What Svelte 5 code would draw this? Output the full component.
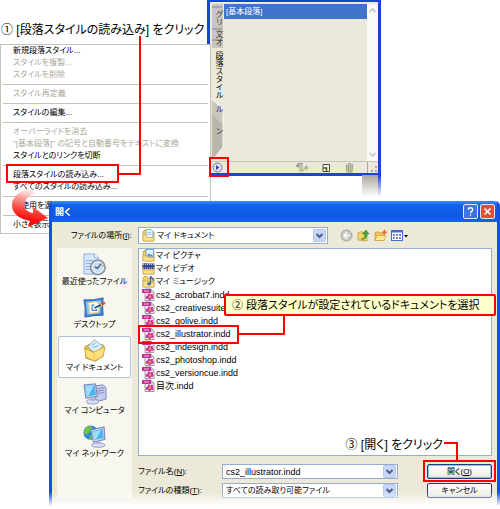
<script lang="ts">
	interface MenuItem {
		label: string;
		disabled?: boolean;
	}

	const menuGroups: MenuItem[][] = [
		[
			{ label: '新規段落スタイル...' },
			{ label: 'スタイルを複製...', disabled: true },
			{ label: 'スタイルを削除', disabled: true }
		],
		[{ label: 'スタイル再定義', disabled: true }],
		[{ label: 'スタイルの編集...' }],
		[
			{ label: 'オーバーライドを消去', disabled: true },
			{ label: '"[基本段落]" の記号と自動番号をテキストに変換', disabled: true },
			{ label: 'スタイルとのリンクを切断' }
		],
		[{ label: '段落スタイルの読み込み...' }, { label: 'すべてのスタイルの読み込み...' }],
		[{ label: '未使用を選択' }],
		[{ label: '小さく表示' }]
	];

	const places = [
		{ icon: 'recent', label: '最近使ったファイル' },
		{ icon: 'desktop', label: 'デスクトップ' },
		{ icon: 'documents', label: 'マイ ドキュメント' },
		{ icon: 'computer', label: 'マイ コンピュータ' },
		{ icon: 'network', label: 'マイ ネットワーク' }
	];

	const files = [
		{ icon: 'pictures', name: 'マイ ピクチャ' },
		{ icon: 'video', name: 'マイ ビデオ' },
		{ icon: 'music', name: 'マイ ミュージック' },
		{ icon: 'indd', name: 'cs2_acrobat7.indd' },
		{ icon: 'indd', name: 'cs2_creativesuite.indd' },
		{ icon: 'indd', name: 'cs2_golive.indd' },
		{ icon: 'indd', name: 'cs2_illustrator.indd' },
		{ icon: 'indd', name: 'cs2_indesign.indd' },
		{ icon: 'indd', name: 'cs2_photoshop.indd' },
		{ icon: 'indd', name: 'cs2_versioncue.indd' },
		{ icon: 'indd', name: '目次.indd' }
	];

	let place = $state('documents');
	let fileName = $state('cs2_illustrator.indd');
</script>

{#snippet chevron()}
	<svg class="chevron" viewBox="0 0 13 13" aria-hidden="true">
		<rect x="0.5" y="0.5" width="12" height="12" rx="1" fill="#c8d6f8" stroke="#b4c6f0" />
		<path d="M3.5 5 L6.5 8 L9.5 5" fill="none" stroke="#4d6185" stroke-width="2" />
	</svg>
{/snippet}

{#snippet smallIcon(name)}
	<svg class="small-icon" viewBox="0 0 13 13" aria-hidden="true">
		{#if name === 'indd'}
			<path d="M3 1 H9 L12 4 V12.5 H3 Z" fill="#fbeef6" stroke="#8d8492" stroke-width="0.8" />
			<path d="M9 1 V4 H12" fill="#ddd" stroke="#8d8492" stroke-width="0.6" />
			<rect x="0" y="1" width="9" height="4" fill="#c42f96" />
			<path d="M2 3 H7" stroke="#f5b9e2" />
			<path d="M4 11 C3 8 5 7.5 6 7.5 C5 5 8 5 8.5 7 C10 4.5 12 6 10.5 8 C13 9 11 12 9 10.5 C9 13 6 12.5 6.5 10.5 Z" fill="#c9309a" />
			<circle cx="8" cy="8.7" r="1.3" fill="#f6a04c" />
		{:else}
			<path d="M1 3 L2 1.5 H5 L6 3 H12 V12 H1 Z" fill="#f2cf63" stroke="#b8923a" stroke-width="0.7" />
			{#if name === 'pictures'}
				<rect x="4" y="0.5" width="7.5" height="7.5" fill="#e8f4ff" stroke="#5c8fc4" stroke-width="0.8" />
				<path d="M4.5 7.5 L7 4 L9 6 L10 5 L11 7.5 Z" fill="#4f9bd3" />
				<path d="M1 7 H5 L6 8.5 H12 V12 H1 Z" fill="#fbe28a" stroke="#c39b3d" stroke-width="0.6" />
			{:else if name === 'video'}
				<rect x="0.5" y="1.5" width="12" height="5.5" fill="#334b7b" />
				<path d="M1 2.5 H12.5 M1 6 H12.5" stroke="#c8d8ef" stroke-dasharray="1 1" />
				<path d="M1 8 H12 V12 H1 Z" fill="#fbe28a" stroke="#c39b3d" stroke-width="0.6" />
			{:else if name === 'music'}
				<path d="M1 6 H6 L7 7.5 H12 V12 H1 Z" fill="#fbe28a" stroke="#c39b3d" stroke-width="0.6" />
				<path d="M8.5 8.5 V1 C9 3 12 3 11 6" fill="none" stroke="#3f67b5" stroke-width="1.3" />
				<ellipse cx="7" cy="8.7" rx="2" ry="1.5" fill="#3f67b5" />
			{:else}
				<path d="M4 0.5 H9 L11 2.5 V9 H4 Z" fill="#e9f5ff" stroke="#6b9ccc" stroke-width="0.8" />
				<path d="M5.5 3.5 H9 M5.5 5.5 H9" stroke="#8ab8df" stroke-width="0.8" />
				<path d="M1 6 H4 L5 8.5 H12 V12 H1 Z" fill="#fbe28a" stroke="#c39b3d" stroke-width="0.6" />
			{/if}
		{/if}
	</svg>
{/snippet}

{#snippet placeIcon(name)}
	<svg class="place-icon" viewBox="0 0 26 24" aria-hidden="true">
		{#if name === 'recent'}
			<path d="M2 1 H13 L17 5 V22 H2 Z" fill="#d6e7fb" stroke="#8badda" />
			<path d="M13 1 V5 H17" fill="#fff" stroke="#8badda" />
			<path d="M4 8 H12 M4 11 H10 M4 14 H9 M4 17 H10" stroke="#83a9dd" />
			<circle cx="16.5" cy="15" r="7.5" fill="#e8eef5" stroke="#8796a8" stroke-width="1.8" />
			<circle cx="16.5" cy="15" r="5" fill="#c5dcf1" />
			<path d="M20 11 L16 16 L13.5 14.5" fill="none" stroke="#40566f" stroke-width="1.3" />
			<path d="M21 14 L23 13" stroke="#e19a3e" stroke-width="1.5" />
		{:else if name === 'desktop'}
			<path d="M2 4 Q12 5 22 2 Q21 11 22 20 Q12 20 3 22 Q4 12 2 4 Z" fill="#3d83d4" stroke="#2863b0" />
			<path d="M4 6 L20 4.5 L19 18 L5.5 19.5 Z" fill="#8cc4f2" />
			<path d="M7 7 L15 6 L18 9 L17 17 L8 18 Z" fill="#fff" stroke="#f4d276" />
			<path d="M13 9.5 H10.5 V15 H15 V13.5" fill="none" stroke="#3d83d4" stroke-width="1.2" />
			<path d="M13 12.5 L20 9" stroke="#26517f" stroke-width="1.8" />
			<path d="M20 9 L24 7" stroke="#dd4b35" stroke-width="2.5" />
			<path d="M19 7 L21 11" stroke="#f2b43a" stroke-width="1.5" />
		{:else if name === 'documents'}
			<path d="M3 8 L9 5 L12 8 L22 6 V18 L14 23 L4 20 Z" fill="#eebb45" stroke="#c6902a" />
			<path d="M6 8 L13 1 L22 8 L14 15 Z" fill="#dff1fd" stroke="#78add8" />
			<path d="M10 7 L14 4 M11 9 L17 7" stroke="#75acd9" />
			<path d="M3 10 L12 14 L24 8 L22 18 L13 23 L4 19 Z" fill="#ffe27c" stroke="#d3a43a" />
			<path d="M12 14 L13 22" stroke="#e7bd50" />
		{:else if name === 'computer'}
			<path d="M14 4 L22 3 L25 6 V18 L17 20 L14 17 Z" fill="#c5ccec" stroke="#7c86ba" />
			<path d="M16 7 L23 6 M16 9.5 L23 8.5 M16 12 L23 11" stroke="#7c86ba" />
			<path d="M2 3 L14 2 L16 15 L4 17 Z" fill="#c7d0ef" stroke="#707db7" />
			<path d="M3.5 4.5 L13 3.5 L14.5 13.5 L5 15 Z" fill="#4eb6ee" />
			<path d="M4 5 L12 4 L7 14 L5 14 Z" fill="#9be0fb" />
			<ellipse cx="11" cy="20.5" rx="6.5" ry="2.5" fill="#dce0f3" stroke="#8f98c4" />
			<path d="M9 16 H13 V20 H9 Z" fill="#abb4da" />
		{:else}
			<circle cx="9" cy="8" r="7.5" fill="#2e86d9" />
			<path d="M3 4 C6 0 11 1 11 3 C8 4 11 7 7 8 C6 11 3 10 2 8 Z M8 11 L13 9 L12 14 L8 15 Z" fill="#6dc542" />
			<path d="M9 5 L23 2 L24 15 L12 18 Z" fill="#c7d0ef" stroke="#707db7" />
			<path d="M10.5 6.5 L21.5 4 L22.5 13.5 L13 15.5 Z" fill="#4eb6ee" />
			<path d="M11 7 L20 5 L15 14 L13 15 Z" fill="#9be0fb" />
			<path d="M15 17 H19 V20 H15 Z" fill="#abb4da" />
			<ellipse cx="17" cy="21" rx="7" ry="2.3" fill="#dce0f3" stroke="#8f98c4" />
		{/if}
	</svg>
{/snippet}

<main class="figure">
	<p class="caption step-one">① [段落スタイルの読み込み] をクリック</p>

	<section class="palette" aria-label="段落スタイル">
		<div class="palette-main">
			<div class="tabs">
				<svg class="tab-shape" viewBox="0 0 12 157" aria-hidden="true">
					<path d="M0 0 H11 V44 H0 Z" fill="#c9c7bd" />
					<path d="M0 3 H10 M0 25 H10 M0 36 H10" stroke="#89877d" />
					<path d="M0 95 L11 106 V129 L0 133 Z" fill="#c9c7bd" />
					<path d="M0 110 L11 121 V143 L0 157 Z" fill="#b9b7ac" />
					<path d="M0 95 L11 106 V143 L0 157" fill="none" stroke="#f8f7f0" />
				</svg>
				<button class="tab">グリ</button>
				<button class="tab tab-text">文</button>
				<button class="tab">オ</button>
				<button class="tab active">段落スタイル</button>
				<button class="tab">ル</button>
				<button class="tab tab-line">ン</button>
			</div>
			<div class="styles">
				<button class="style-row">[基本段落]</button>
			</div>
			<div class="scrollbar">
				<button aria-label="上へ">
					<svg viewBox="0 0 9 9"><path d="M1.5 6 L4.5 3 L7.5 6" fill="none" stroke="#c4c3bb" stroke-width="1.5" /></svg>
				</button>
				<button aria-label="下へ">
					<svg viewBox="0 0 9 9"><path d="M1.5 3 L4.5 6 L7.5 3" fill="none" stroke="#c4c3bb" stroke-width="1.5" /></svg>
				</button>
			</div>
		</div>
		<div class="palette-tools">
			<button class="flyout" aria-label="メニュー">
				<svg viewBox="0 0 11 11">
					<circle cx="5.5" cy="5.5" r="4.5" fill="#dfe3f3" stroke="#7179ac" />
					<path d="M4 3 L7.5 5.5 L4 8 Z" fill="#3c4a9a" />
				</svg>
			</button>
			<button aria-label="オーバーライドを消去">
				<svg class="wide" viewBox="0 0 14 11">
					<path d="M5 1.5 V10 M7 1.5 V10 M8 1.5 H3" stroke="#9a988e" fill="none" />
					<path d="M1 3 A2 2 0 0 0 4 5 V1.5 Z" fill="#9a988e" />
					<path d="M8 9 L12 3 M9 6 H14 M11.5 4 V8.5" stroke="#aaa89e" fill="none" />
				</svg>
			</button>
			<button aria-label="新規スタイル">
				<svg viewBox="0 0 11 11">
					<path d="M2 2.5 H8.5 V9.5 H2 Z" fill="#f6f5ee" stroke="#4a4a46" />
					<path d="M2.5 6 H5.5 V9" fill="none" stroke="#4a4a46" stroke-width="1.5" />
				</svg>
			</button>
			<button aria-label="削除">
				<svg viewBox="0 0 11 11">
					<path d="M2.5 4 H8.5 L8 10 H3 Z" fill="#cfcdc2" stroke="#9d9b91" />
					<path d="M1.5 3 H9.5 M4 1.5 H7 M4.5 5 V9 M6.5 5 V9" stroke="#9d9b91" />
				</svg>
			</button>
			<svg class="grip" viewBox="0 0 11 11" aria-hidden="true">
				<path d="M0.5 0 V11" stroke="#aca899" />
				<path d="M8 5 h2 M4 9 h2 M8 9 h2" stroke="#aca899" stroke-width="2" />
			</svg>
		</div>
	</section>
	<div class="palette-tail"></div>

	<nav class="menu" aria-label="段落スタイルメニュー">
		{#each menuGroups as group, i}
			{#if i > 0}
				<hr />
			{/if}
			{#each group as item}
				<button class="menu-item" disabled={item.disabled}>{item.label}</button>
			{/each}
		{/each}
	</nav>

	<div class="mark mark-flyout"></div>
	<div class="mark mark-menu"></div>
	<svg class="leader leader-one" viewBox="0 0 23 139" aria-hidden="true">
		<path d="M22 0 V138 H0" fill="none" stroke="#f00" stroke-width="2" />
	</svg>

	<section class="dialog" aria-label="開く">
		<header class="title-bar">
			<h1>開く</h1>
			<button class="title-button" aria-label="ヘルプ">
				<svg viewBox="0 0 15 15">
					<path d="M5 5.5 C5 2.5 10 2.5 10 5.5 C10 7.5 7.5 7.3 7.5 9.5 M7.5 11 V12.5" fill="none" stroke="#fff" stroke-width="1.6" />
				</svg>
			</button>
			<button class="title-button close" aria-label="閉じる">
				<svg viewBox="0 0 15 15"><path d="M4 4 L11 11 M11 4 L4 11" stroke="#fff" stroke-width="1.8" /></svg>
			</button>
		</header>

		<div class="dialog-body">
			<div class="look-in">
				<label for="look-in">ファイルの場所(<u>I</u>):</label>
				<div class="combo folder-combo">
					{@render smallIcon('folder')}
					<select id="look-in">
						<option>マイ ドキュメント</option>
					</select>
					{@render chevron()}
				</div>
				<div class="nav-tools">
					<button aria-label="戻る">
						<svg viewBox="0 0 13 13">
							<circle cx="6.5" cy="6.5" r="5.5" fill="#c9c8c1" stroke="#a5a49d" />
							<path d="M7 3.5 L4 6.5 L7 9.5 M4 6.5 H9.5" fill="none" stroke="#fff" stroke-width="1.5" />
						</svg>
					</button>
					<button aria-label="1 つ上のフォルダへ">
						<svg viewBox="0 0 13 13">
							<path d="M1 4 L5 2.5 L6 4 H10 V12 L1 11 Z" fill="#f6d667" stroke="#c39b3d" stroke-width="0.8" />
							<path d="M4 10 C7 10 8 8 8 5 H5.5 L9 1 L12 5 H10 C10 9 7 11 4 10 Z" fill="#3fa535" stroke="#23781d" stroke-width="0.5" />
						</svg>
					</button>
					<button aria-label="新しいフォルダの作成">
						<svg viewBox="0 0 13 13">
							<path d="M1 4 L2 3 H5 L6 4 H10 V11.5 H1 Z" fill="#f2c64e" stroke="#c39b3d" stroke-width="0.8" />
							<path d="M1 11.5 L3 6.5 H12 L10 11.5 Z" fill="#fde795" stroke="#c39b3d" stroke-width="0.6" />
							<circle cx="10.5" cy="3.3" r="2" fill="#f08058" />
							<path d="M10.5 0.5 V6 M8 3.3 H13" stroke="#e8643a" stroke-width="0.8" />
						</svg>
					</button>
					<button aria-label="表示メニュー">
						<svg class="view-icon" viewBox="0 0 17 13">
							<rect x="0.5" y="1.5" width="11" height="10" fill="#fff" stroke="#3f6fc8" />
							<path d="M0 2.5 H12" stroke="#3f6fc8" stroke-width="2" />
							<path d="M2 6 H10 M2 9 H10" stroke="#4a62a0" stroke-width="1.5" stroke-dasharray="2 1" />
							<path d="M13 6 H17 L15 8.5 Z" fill="#000" />
						</svg>
					</button>
				</div>
			</div>

			<div class="places">
				{#each places as item}
					<button class="place" class:selected={place === item.icon} onclick={() => (place = item.icon)}>
						{@render placeIcon(item.icon)}
						<span>{item.label}</span>
					</button>
				{/each}
			</div>

			<div class="file-list">
				{#each files as file}
					<button class="file" class:document={file.icon === 'indd'} onclick={() => (fileName = file.name)}>
						{@render smallIcon(file.icon)}
						<span>{file.name}</span>
					</button>
				{/each}
			</div>

			<form class="fields" onsubmit={(event) => event.preventDefault()}>
				<label for="file-name">ファイル名(<u>N</u>):</label>
				<div class="combo">
					<input id="file-name" type="text" bind:value={fileName} />
					{@render chevron()}
				</div>
				<button class="push default">開く(<u>O</u>)</button>
				<label for="file-type">ファイルの種類(<u>T</u>):</label>
				<div class="combo">
					<select id="file-type">
						<option>すべての読み取り可能ファイル</option>
					</select>
					{@render chevron()}
				</div>
				<button class="push" type="button">キャンセル</button>
			</form>
		</div>

		<div class="fade"></div>
		<div class="mark mark-file"></div>
		<svg class="leader leader-two" viewBox="0 0 46 20" aria-hidden="true">
			<path d="M0 18 H45 V0" fill="none" stroke="#f00" stroke-width="2" />
		</svg>
		<p class="caption step-two">② 段落スタイルが設定されているドキュメントを選択</p>
		<p class="caption step-three">③ [開く] をクリック</p>
		<svg class="leader leader-three" viewBox="0 0 14 19" aria-hidden="true">
			<path d="M0 1 H13 V19" fill="none" stroke="#f00" stroke-width="2" />
		</svg>
		<div class="mark mark-open"></div>
	</section>

	<svg class="swoosh" viewBox="0 0 40 42" aria-hidden="true">
		<defs>
			<linearGradient id="swoosh-fill" x1="0.7" y1="0" x2="0.5" y2="1">
				<stop offset="0" stop-color="#fff" stop-opacity="0.6" />
				<stop offset="0.3" stop-color="#f9a8a4" />
				<stop offset="0.55" stop-color="#f4564e" />
				<stop offset="0.8" stop-color="#f11" />
				<stop offset="1" stop-color="#f00" />
			</linearGradient>
		</defs>
		<path d="M21 1 C10 3 2 10 2 18 C2 27 10 32 20 34 L18 40 L38 31 L23 20 L23 26 C16 25 13 20 15 15 C17 10 20 8 25 6 Z" fill="url(#swoosh-fill)" />
	</svg>
</main>

<style>
	:global(body) {
		margin: 0;
		background: #fff;
	}

	.figure {
		position: relative;
		padding: 201px 0 0 49px;
		overflow: hidden;
		color: #000;
		font-family: 'Liberation Sans', 'Noto Sans CJK JP', sans-serif;
		font-size: 8px;
		line-height: 12px;
		font-feature-settings: 'palt';
		white-space: nowrap;
	}

	button,
	input,
	select {
		margin: 0;
		padding: 0;
		border: 0;
		background: transparent;
		color: inherit;
		font: inherit;
		font-feature-settings: inherit;
		white-space: nowrap;
	}

	button {
		display: block;
	}

	svg {
		display: block;
	}

	.caption {
		position: absolute;
		margin: 0;
		font-size: 12px;
		line-height: 18px;
	}

	.step-one {
		top: 21px;
		left: 1px;
	}

	/* Menu */
	.menu {
		position: absolute;
		top: 44px;
		left: 0;
		box-sizing: border-box;
		width: 211px;
		padding: 0 2px 2px;
		border: 1px solid #c5c2b8;
		background: #fff;
	}

	.menu-item {
		width: 100%;
		height: 12px;
		padding-left: 10px;
		text-align: left;
	}

	.menu-item:disabled {
		color: #aca899;
	}

	.menu hr {
		height: 1px;
		margin: 3px 0;
		border: 0;
		background: #c5c2b8;
	}

	/* Palette */
	.palette {
		position: absolute;
		top: 0;
		left: 207px;
		box-sizing: border-box;
		width: 174px;
		padding-left: 2px;
		border: 3px solid #1746d2;
		border-width: 2px 3px 3px;
		background: #ece9d8;
	}

	.palette-main {
		display: grid;
		grid-template-columns: 12px 1fr 11px;
		height: 157px;
		padding-top: 2px;
		border-bottom: 1px solid #c5c2b8;
	}

	.tabs {
		position: relative;
		display: flex;
		flex-direction: column;
		padding-top: 6px;
	}

	.tab-shape {
		position: absolute;
		top: 0;
		left: 0;
		width: 12px;
		height: 157px;
	}

	.tab {
		position: relative;
		width: 12px;
		color: #333;
		font-feature-settings: normal;
		line-height: 12px;
		text-align: left;
		writing-mode: vertical-rl;
	}

	.tab-text {
		margin-top: 4px;
	}

	.tab.active {
		padding: 5px 0 6px;
		color: #000;
	}

	.tab-line {
		margin-top: 14px;
	}

	.styles {
		background: #ebe9dc;
	}

	.style-row {
		width: 100%;
		height: 15px;
		padding-left: 2px;
		background: #4073cb;
		color: #fff;
		text-align: left;
	}

	.scrollbar {
		display: flex;
		flex-direction: column;
		justify-content: space-between;
		padding: 2px 1px;
		background: #fbfaf5;
	}

	.scrollbar svg {
		width: 9px;
		height: 9px;
	}

	.palette-tools {
		display: flex;
		align-items: center;
		gap: 12px;
		height: 11px;
	}

	.palette-tools svg {
		width: 11px;
		height: 11px;
	}

	.palette-tools .wide {
		width: 14px;
	}

	.palette-tools .flyout {
		margin-right: auto;
	}

	.palette-tail {
		position: absolute;
		top: 175px;
		left: 362px;
		width: 16px;
		height: 22px;
		border-right: 3px solid #1746d2;
		background: #a9a79c;
		mask-image: linear-gradient(#000, transparent);
	}

	/* Open dialog */
	.dialog {
		position: relative;
		border: solid #1750dc;
		border-width: 0 3px;
		border-radius: 5px 5px 0 0;
		background: #ece9d8;
	}

	.title-bar {
		display: flex;
		align-items: center;
		gap: 2px;
		height: 21px;
		padding: 0 2px 0 3px;
		border-radius: 3px 3px 0 0;
		background: linear-gradient(#3c8df5, #1163ea 20%, #0f58dd 70%, #1262ee);
		color: #fff;
	}

	.title-bar h1 {
		flex: 1;
		margin: 0;
		font-size: 9px;
		line-height: 12px;
	}

	.title-button {
		box-sizing: border-box;
		width: 15px;
		height: 15px;
		border: 1px solid #dfe8fb;
		border-radius: 2px;
		background: #3c72e4;
	}

	.title-button.close {
		background: #e2502f;
	}

	.dialog-body {
		display: grid;
		grid-template-columns: 75px minmax(0, 1fr);
		grid-template-rows: 17px 208px auto;
		gap: 4px 6px;
		padding: 5px 5px 12px;
	}

	.look-in {
		display: flex;
		grid-column: 1 / -1;
		align-items: center;
		gap: 6px;
	}

	.look-in label {
		width: 75px;
		text-align: right;
	}

	.folder-combo {
		flex: 0 1 190px;
	}

	.combo {
		display: flex;
		box-sizing: border-box;
		align-items: center;
		height: 100%;
		min-width: 0;
		padding: 0 1px 0 3px;
		border: 1px solid #93aed0;
		background: #fff;
	}

	.combo input,
	.combo select {
		flex: 1;
		min-width: 0;
		height: 12px;
		appearance: none;
		outline: 0;
	}

	.combo input {
		font-size: 9px;
	}

	.folder-combo select {
		padding-left: 2px;
	}

	.chevron {
		width: 13px;
		height: 13px;
	}

	.nav-tools {
		display: flex;
		gap: 4px;
		padding-left: 6px;
	}

	.nav-tools svg {
		width: 13px;
		height: 13px;
	}

	.nav-tools .view-icon {
		width: 17px;
	}

	.places {
		display: flex;
		grid-row: 2 / 4;
		flex-direction: column;
		gap: 1px;
		box-sizing: border-box;
		padding: 2px 1px;
		background: #f7f6ef;
	}

	.place {
		display: flex;
		box-sizing: border-box;
		flex-direction: column;
		align-items: center;
		height: 42px;
		padding-top: 2px;
		border: 1px solid transparent;
		border-radius: 2px;
	}

	.place.selected {
		border-color: #b4c4d8;
		background: #fff;
	}

	.place-icon {
		width: 25px;
		height: 23px;
	}

	.small-icon {
		flex: none;
		width: 13px;
		height: 13px;
	}

	.file-list {
		padding-left: 3px;
		border: 1px solid #93aed0;
		background: #fff;
	}

	.file {
		display: flex;
		align-items: center;
		gap: 1px;
		height: 13px;
	}

	.file.document {
		font-size: 9px;
	}

	.fields {
		display: grid;
		grid-template-columns: 79px minmax(0, 176px) minmax(65px, 1fr);
		grid-template-rows: 15px 15px;
		grid-column: 2;
		align-items: center;
		gap: 4px 5px;
		padding-top: 4px;
	}

	.push {
		box-sizing: border-box;
		justify-self: end;
		width: 65px;
		height: 15px;
		border: 1px solid #1c3f75;
		border-radius: 2px;
		background: linear-gradient(#fff, #f0efe8 80%, #d8d3c6);
		line-height: 12px;
	}

	.push.default {
		box-shadow: inset 0 0 0 1px #a5bdea;
	}

	.fade {
		position: absolute;
		right: -3px;
		bottom: 0;
		left: -3px;
		height: 18px;
		background: linear-gradient(transparent, #fff 80%);
		pointer-events: none;
	}

	/* Call-outs */
	.mark {
		position: absolute;
		box-sizing: border-box;
		border: 2px solid #f00;
		pointer-events: none;
	}

	.mark-flyout {
		top: 157px;
		left: 209px;
		width: 20px;
		height: 20px;
	}

	.mark-menu {
		top: 164px;
		left: 6px;
		width: 113px;
		height: 19px;
	}

	.mark-file {
		top: 124px;
		left: 86px;
		width: 101px;
		height: 19px;
	}

	.mark-open {
		right: 1px;
		bottom: 28px;
		width: 73px;
		height: 22px;
	}

	.leader {
		position: absolute;
		pointer-events: none;
	}

	.leader-one {
		top: 36px;
		left: 118px;
		width: 23px;
		height: 139px;
	}

	.leader-two {
		top: 115px;
		left: 187px;
		width: 46px;
		height: 20px;
	}

	.leader-three {
		right: 39px;
		bottom: 49px;
		width: 14px;
		height: 19px;
	}

	.step-two {
		top: 93px;
		right: 1px;
		left: 172px;
		padding: 0 6px;
		border: 2px solid #f00;
		border-radius: 2px;
		background: #ffc;
		font-size: 11px;
	}

	.step-three {
		right: 54px;
		bottom: 56px;
	}

	.swoosh {
		position: absolute;
		top: 187px;
		left: 10px;
		width: 40px;
		height: 42px;
	}
</style>
